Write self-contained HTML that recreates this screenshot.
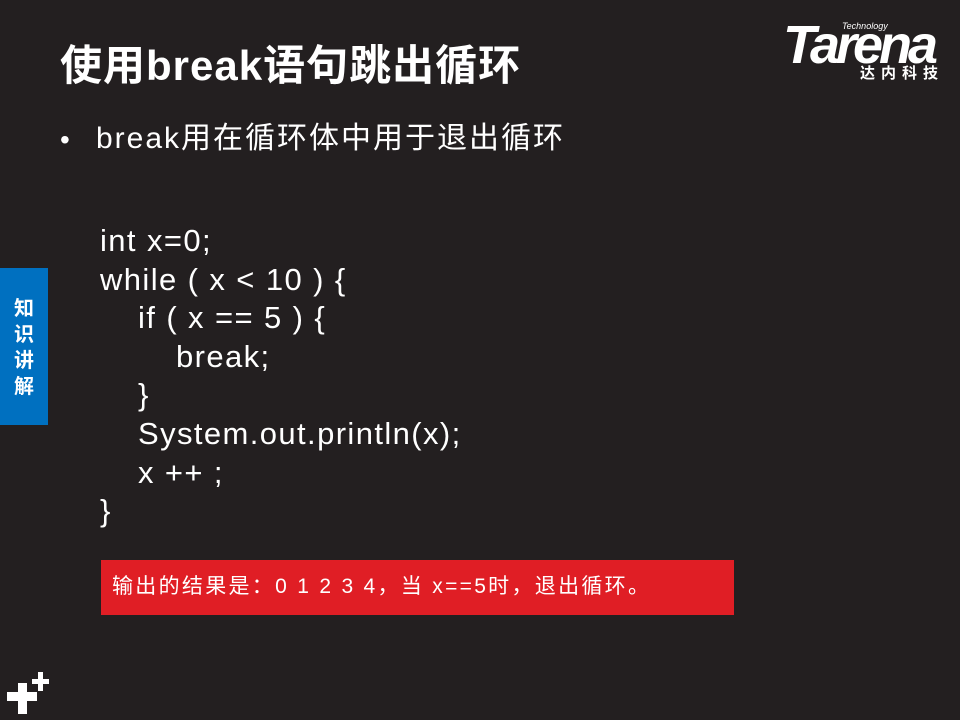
<!DOCTYPE html>
<html><head><meta charset="utf-8"><style>
body{margin:0;width:960px;height:720px;background:#231f20;position:relative;overflow:hidden;font-family:"Liberation Sans","Noto Sans CJK SC",sans-serif;color:#fff}
.a{position:absolute;white-space:nowrap}
h1{position:absolute;left:60px;top:36px;margin:0;font-size:42px;letter-spacing:1px;font-weight:bold;line-height:60px;white-space:nowrap}
.code{position:absolute;left:100px;top:222px;font-size:31px;letter-spacing:1.4px;line-height:38.6px;white-space:nowrap}
.code div{height:38.6px}
</style></head><body>
<h1>使用break语句跳出循环</h1>
<div class="a" style="left:783px;top:20px;font-size:54px;font-weight:bold;font-style:italic;letter-spacing:-4px;line-height:50px">Tarena</div>
<div class="a" style="left:842px;top:21px;font-size:9px;font-style:italic">Technology</div>
<div class="a" style="left:860px;top:62px;font-size:15px;font-weight:bold;letter-spacing:6px">达内科技</div>
<div class="a" style="left:60px;top:122px;font-size:28px;line-height:36px">•</div>
<div class="a" style="left:96px;top:121px;font-size:30px;letter-spacing:2px;line-height:36px">break用在循环体中用于退出循环</div>
<div style="position:absolute;left:0;top:268px;width:48px;height:157px;background:#0070c0"></div>
<div class="a" style="left:12px;top:296px;width:24px;font-size:20px;font-weight:bold;line-height:26px;white-space:normal;text-align:center">知识讲解</div>
<div class="code">
<div>int x=0;</div>
<div>while ( x &lt; 10 ) {</div>
<div style="padding-left:38px">if ( x == 5 ) {</div>
<div style="padding-left:76px">break;</div>
<div style="padding-left:38px">}</div>
<div style="padding-left:38px">System.out.println(x);</div>
<div style="padding-left:38px">x ++ ;</div>
<div>}</div>
</div>
<div style="position:absolute;left:101px;top:560px;width:633px;height:55px;background:#e01e25"></div>
<div class="a" style="left:112px;top:572px;font-size:21px;letter-spacing:2.3px;line-height:30px">输出的结果是：0 1 2 3 4，当 x==5时，退出循环。</div>
<div style="position:absolute;left:7px;top:692px;width:30px;height:9px;background:#fff"></div>
<div style="position:absolute;left:18px;top:683px;width:9px;height:31px;background:#fff"></div>
<div style="position:absolute;left:32px;top:679px;width:17px;height:5px;background:#fff"></div>
<div style="position:absolute;left:38px;top:672px;width:5px;height:19px;background:#fff"></div>
</body></html>
